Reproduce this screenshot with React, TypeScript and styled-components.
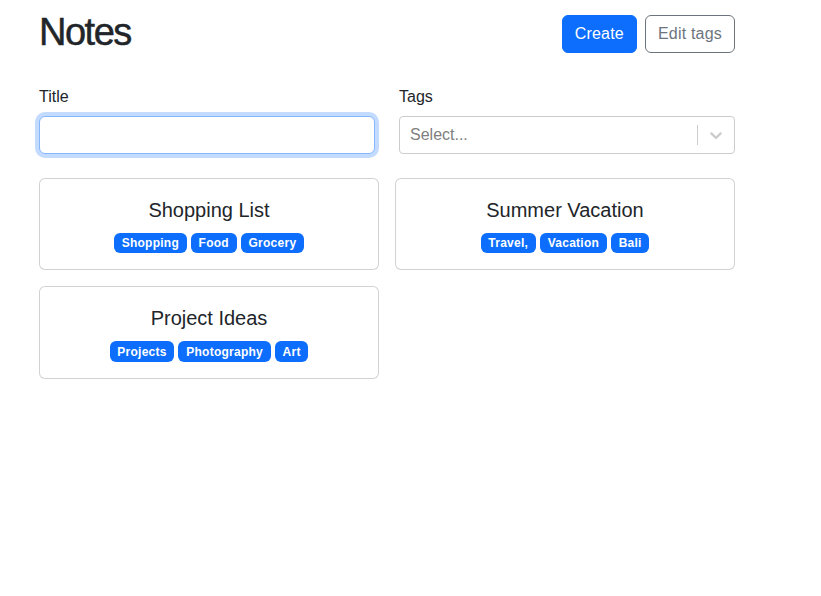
import React from "react";
import styled, { createGlobalStyle } from "styled-components";

const GlobalStyle = createGlobalStyle`
  * { box-sizing: border-box; }
  body {
    margin: 0;
    background: #fff;
    color: #212529;
    font-family: "Liberation Sans", Arial, sans-serif;
    font-size: 16px;
    line-height: 1.5;
  }
`;

const Container = styled.div`
  width: 696px;
  margin-left: 39px;
  padding-top: 7px;
`;

const Header = styled.div`
  display: flex;
  align-items: center;
  margin-bottom: 24px;
`;

const Heading = styled.h1`
  flex: 1;
  margin: 0 0 7px;
  padding-top: 3px;
  height: 47px;
  font-size: 38px;
  font-weight: 500;
  line-height: 1.2;
  letter-spacing: -1.5px;
  -webkit-text-stroke: 0.5px #212529;
`;

const ButtonStack = styled.div`
  display: flex;
  gap: 8px;
`;

const Button = styled.button<{ $variant: "primary" | "outline" }>`
  font-family: inherit;
  font-size: 16px;
  line-height: 1.5;
  letter-spacing: 0.2px;
  padding: 6px 12px;
  border-radius: 6px;
  cursor: pointer;
  border: 1px solid ${(p) => (p.$variant === "primary" ? "#0d6efd" : "#6c757d")};
  background: ${(p) => (p.$variant === "primary" ? "#0d6efd" : "transparent")};
  color: ${(p) => (p.$variant === "primary" ? "#fff" : "#6c757d")};
`;

const FormRow = styled.div`
  display: grid;
  grid-template-columns: 1fr 1fr;
  column-gap: 24px;
  margin-bottom: 24px;
`;

const Field = styled.div`
  display: flex;
  flex-direction: column;
`;

const Label = styled.label`
  display: block;
  margin-bottom: 7px;
  line-height: 24px;
`;

const TextInput = styled.input`
  display: block;
  width: 100%;
  height: 38px;
  padding: 6px 12px;
  font-family: inherit;
  font-size: 16px;
  color: #212529;
  background: #fff;
  border: 1px solid #86b7fe;
  border-radius: 6px;
  outline: none;
  box-shadow: 0 0 0 4px rgba(13, 110, 253, 0.25);
`;

const SelectControl = styled.div`
  display: flex;
  align-items: center;
  height: 38px;
  border: 1px solid #cccccc;
  border-radius: 4px;
  background: #fff;
`;

const SelectValue = styled.div`
  flex: 1;
  padding: 2px 8px;
`;

const Placeholder = styled.span`
  margin-left: 2px;
  color: #808080;
`;

const Separator = styled.span`
  align-self: stretch;
  width: 1px;
  margin: 8px 0;
  background: #cccccc;
`;

const Indicator = styled.div`
  display: flex;
  padding: 8px;
  color: #cccccc;
`;

const CardGrid = styled.div`
  display: grid;
  grid-template-columns: 1fr 1fr;
  gap: 16px;
`;

const Card = styled.div`
  border: 1px solid rgba(0, 0, 0, 0.175);
  border-radius: 6px;
  background: #fff;
  padding: 16px;
  display: flex;
  flex-direction: column;
  align-items: center;
  justify-content: center;
  gap: 8px;
`;

const CardTitle = styled.span`
  font-size: 20px;
  line-height: 1.5;
`;

const BadgeRow = styled.div`
  display: flex;
  flex-wrap: wrap;
  justify-content: center;
  gap: 4px;
`;

const Badge = styled.span`
  display: inline-block;
  padding: 4.2px 7.8px;
  font-size: 12px;
  font-weight: 700;
  line-height: 1;
  letter-spacing: 0.25px;
  color: #fff;
  background: #0d6efd;
  border-radius: 6px;
  white-space: nowrap;
`;

const notes = [
  { title: "Shopping List", tags: ["Shopping", "Food", "Grocery"] },
  { title: "Summer Vacation", tags: ["Travel,", "Vacation", "Bali"] },
  { title: "Project Ideas", tags: ["Projects", "Photography", "Art"] },
];

const Chevron = () => (
  <svg width="20" height="20" viewBox="0 0 20 20" fill="currentColor" aria-hidden="true">
    <path d="M4.516 7.548c0.436-0.446 1.043-0.481 1.576 0l3.908 3.747 3.908-3.747c0.533-0.481 1.141-0.446 1.574 0 0.436 0.445 0.408 1.197 0 1.615-0.406 0.418-4.695 4.502-4.695 4.502-0.217 0.223-0.502 0.335-0.787 0.335s-0.57-0.112-0.789-0.335c0 0-4.287-4.084-4.695-4.502s-0.436-1.17 0-1.615z" />
  </svg>
);

export default function App() {
  return (
    <>
      <GlobalStyle />
      <Container>
        <Header>
          <Heading>Notes</Heading>
          <ButtonStack>
            <Button $variant="primary">Create</Button>
            <Button $variant="outline">Edit tags</Button>
          </ButtonStack>
        </Header>
        <FormRow>
          <Field>
            <Label htmlFor="title">Title</Label>
            <TextInput id="title" type="text" />
          </Field>
          <Field>
            <Label>Tags</Label>
            <SelectControl>
              <SelectValue>
                <Placeholder>Select...</Placeholder>
              </SelectValue>
              <Separator />
              <Indicator>
                <Chevron />
              </Indicator>
            </SelectControl>
          </Field>
        </FormRow>
        <CardGrid>
          {notes.map((n) => (
            <Card key={n.title}>
              <CardTitle>{n.title}</CardTitle>
              <BadgeRow>
                {n.tags.map((t) => (
                  <Badge key={t}>{t}</Badge>
                ))}
              </BadgeRow>
            </Card>
          ))}
        </CardGrid>
      </Container>
    </>
  );
}
